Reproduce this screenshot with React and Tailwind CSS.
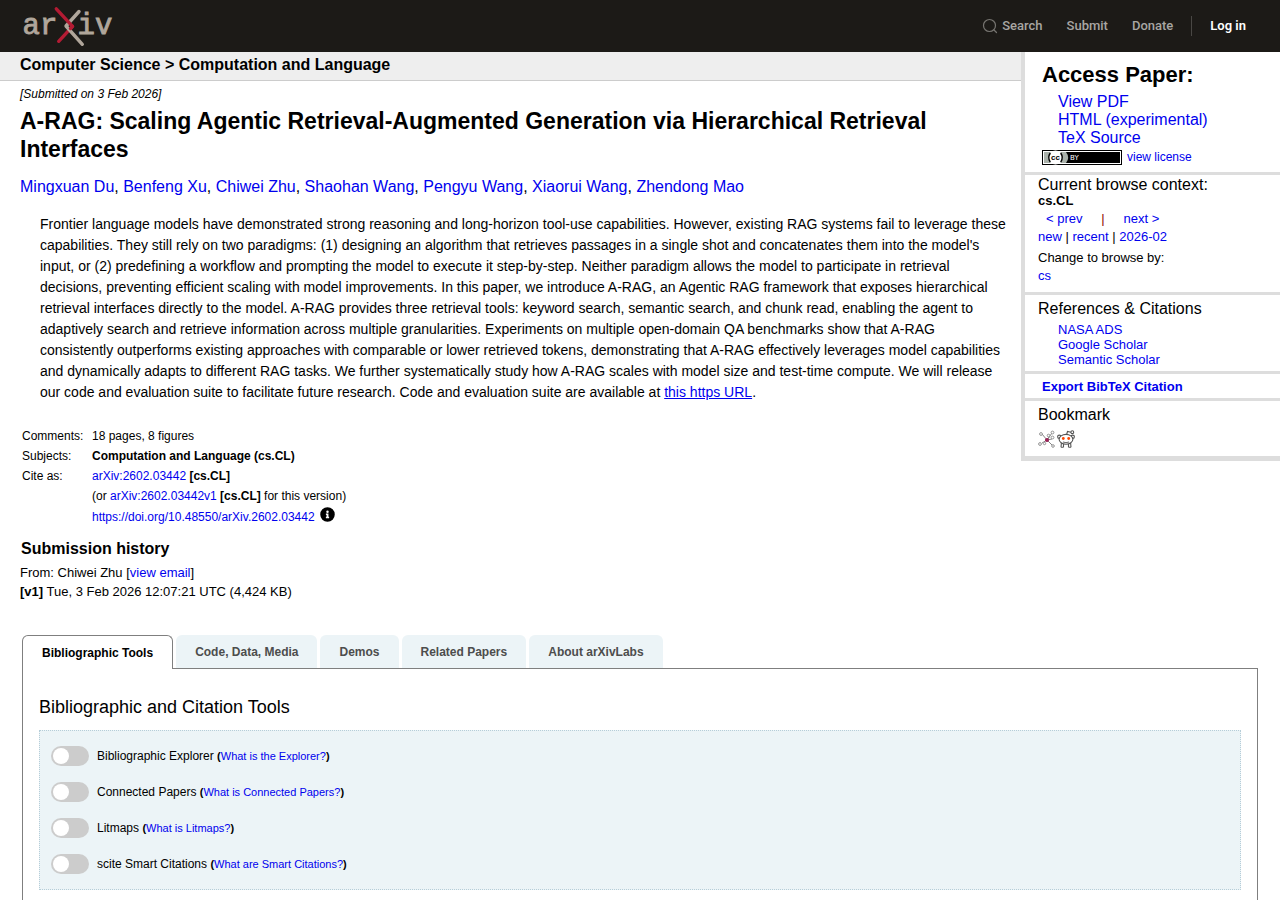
import React from "react";

const link = "text-[#0000ee] hover:underline";

const authors = [
  "Mingxuan Du",
  "Benfeng Xu",
  "Chiwei Zhu",
  "Shaohan Wang",
  "Pengyu Wang",
  "Xiaorui Wang",
  "Zhendong Mao",
];

const tabs = ["Bibliographic Tools", "Code, Data, Media", "Demos", "Related Papers", "About arXivLabs"];

const tools = [
  { id: "explorer", name: "Bibliographic Explorer", help: "What is the Explorer?" },
  { id: "connected", name: "Connected Papers", help: "What is Connected Papers?" },
  { id: "litmaps", name: "Litmaps", help: "What is Litmaps?" },
  { id: "scite", name: "scite Smart Citations", help: "What are Smart Citations?" },
];

function Logo() {
  return (
    <svg width="92" height="44" viewBox="22 4 92 44" role="img" aria-label="arXiv">
      <g fill="#b0a69b" stroke="#b0a69b" strokeWidth="0.9" fontSize="29" fontFamily="'Liberation Mono', monospace">
        <text x="22.500" y="34.300">ar</text>
        <text x="77.500" y="34.300">iv</text>
      </g>
      <g fill="none" strokeLinecap="round" strokeLinejoin="round" strokeWidth="3.400">
        <path d="M72.500 26.300 58.700 41.300" stroke="#b31b33" />
        <path d="M79 11.500 66 26 82.300 44.300" stroke="#b0a69b" />
        <path d="M56.300 8.800 72.500 26.300 70.500 28.500" stroke="#b31b33" />
      </g>
    </svg>
  );
}

function Header() {
  const item = "text-[#a8a6a3] hover:text-white";
  return (
    <header className="flex h-13 items-center justify-between bg-[#1c1a17] pl-[22px] pr-[34px]">
      <a href="#home">
        <Logo />
      </a>
      <nav className="flex items-center font-[Roboto,sans-serif] text-[13px] font-medium">
        <a href="#search" className={`${item} flex items-center gap-1`}>
          <svg width="16" height="16" viewBox="0 0 16 16" fill="none" stroke="#767470" strokeWidth="1.2" strokeLinecap="round" aria-hidden="true">
            <circle cx="7.500" cy="7.500" r="6" />
            <path d="m12 12 2.500 2.500" />
          </svg>
          Search
        </a>
        <a href="#submit" className={`${item} ml-6`}>Submit</a>
        <a href="#donate" className={`${item} ml-6`}>Donate</a>
        <span className="ml-[18px] h-5 w-px bg-[#494744]" />
        <a href="#login" className="ml-[18px] font-semibold text-white">Log in</a>
      </nav>
    </header>
  );
}

function Metadata() {
  return (
    <table className="mt-[23px] ml-[21px] text-[12px] leading-5">
      <tbody>
        <tr>
          <td className="w-[71px] pl-px">Comments:</td>
          <td>18 pages, 8 figures</td>
        </tr>
        <tr>
          <td className="pl-px">Subjects:</td>
          <td className="font-bold">Computation and Language (cs.CL)</td>
        </tr>
        <tr>
          <td className="pl-px">Cite as:</td>
          <td>
            <a href="#cite" className={link}>arXiv:2602.03442</a> <b>[cs.CL]</b>
          </td>
        </tr>
        <tr>
          <td></td>
          <td>
            (or <a href="#v1" className={link}>arXiv:2602.03442v1</a> <b>[cs.CL]</b> for this version)
          </td>
        </tr>
        <tr>
          <td></td>
          <td>
            <div className="flex items-start gap-[5px]">
              <a href="#doi" className={`${link} pt-px`}>https://doi.org/10.48550/arXiv.2602.03442</a>
              <button type="button" aria-label="Focus to learn more" className="pt-px">
                <svg className="block" width="15" height="15" viewBox="0 0 512 512" aria-hidden="true">
                  <path d="M256 8a248 248 0 1 0 0 496 248 248 0 0 0 0-496zm0 110a42 42 0 1 1 0 84 42 42 0 0 1 0-84zm56 254c0 7-5 12-12 12h-88c-7 0-12-5-12-12v-24c0-7 5-12 12-12h12v-64h-12c-7 0-12-5-12-12v-24c0-7 5-12 12-12h64c7 0 12 5 12 12v100h12c7 0 12 5 12 12z" />
                </svg>
              </button>
            </div>
          </td>
        </tr>
      </tbody>
    </table>
  );
}

function Paper() {
  return (
    <main className="min-w-0 flex-1">
      <h1 className="border-b border-[#cccccc] bg-[#eeeeee] pt-[3px] pb-[5px] pl-5 text-[16px] leading-5 font-bold">
        Computer Science &gt; Computation and Language
      </h1>
      <p className="mt-[5px] pl-5 text-[12px] leading-4 italic">[Submitted on 3 Feb 2026]</p>
      <h2 className="mt-[5px] max-w-[960px] pl-5 text-[23px] leading-7 font-bold">
        A-RAG: Scaling Agentic Retrieval-Augmented Generation via Hierarchical Retrieval Interfaces
      </h2>
      <p className="mt-3 pl-5 text-[16px] leading-6">
        {authors.map((name, i) => (
          <React.Fragment key={name}>
            {i > 0 && ", "}
            <a href="#author" className={link}>{name}</a>
          </React.Fragment>
        ))}
      </p>
      <blockquote className="mt-[15px] pr-[11px] pl-10 text-[14px] leading-[21px]">
        Frontier language models have demonstrated strong reasoning and long-horizon tool-use capabilities. However,
        existing RAG systems fail to leverage these capabilities. They still rely on two paradigms: (1) designing an
        algorithm that retrieves passages in a single shot and concatenates them into the model's input, or (2)
        predefining a workflow and prompting the model to execute it step-by-step. Neither paradigm allows the model to
        participate in retrieval decisions, preventing efficient scaling with model improvements. In this paper, we
        introduce A-RAG, an Agentic RAG framework that exposes hierarchical retrieval interfaces directly to the model.
        A-RAG provides three retrieval tools: keyword search, semantic search, and chunk read, enabling the agent to
        adaptively search and retrieve information across multiple granularities. Experiments on multiple open-domain
        QA benchmarks show that A-RAG consistently outperforms existing approaches with comparable or lower retrieved
        tokens, demonstrating that A-RAG effectively leverages model capabilities and dynamically adapts to different
        RAG tasks. We further systematically study how A-RAG scales with model size and test-time compute. We will
        release our code and evaluation suite to facilitate future research. Code and evaluation suite are available
        at <a href="#code" className="text-[#0000ee] underline">this https URL</a>.
      </blockquote>
      <Metadata />
      <section className="mt-3 pl-5">
        <h2 className="pl-px text-[16px] leading-5 font-bold">Submission history</h2>
        <p className="mt-1 text-[13px] leading-[19px]">
          From: Chiwei Zhu [<a href="#email" className={link}>view email</a>]
          <br />
          <b>[v1]</b> Tue, 3 Feb 2026 12:07:21 UTC (4,424 KB)
        </p>
      </section>
    </main>
  );
}

function LicenseBadge() {
  return (
    <svg width="80" height="15" viewBox="0 0 80 15" aria-hidden="true">
      <rect width="80" height="15" fill="#000" />
      <rect x="1" y="1" width="78" height="13" fill="#fff" />
      <rect x="2" y="2" width="76" height="11" fill="#000" />
      <path d="M2 2h22a9 9 0 0 1 0 11H2z" fill="#aab2ab" />
      <circle cx="13.500" cy="7.500" r="7" fill="#fff" />
      <path d="M8.300 3a8 8 0 0 0 0 9M18.700 3a8 8 0 0 1 0 9" fill="none" stroke="#000" strokeWidth="1.500" />
      <text x="13.500" y="10" textAnchor="middle" fontSize="8" fontWeight="700" fontFamily="'Liberation Sans', sans-serif">cc</text>
      <text x="28" y="10" fill="#fff" fontSize="7" fontFamily="'DejaVu Sans', sans-serif">BY</text>
    </svg>
  );
}

function BibSonomyIcon() {
  return (
    <svg width="18" height="18" viewBox="0 0 18 18" fill="none" stroke="#888" strokeWidth="0.900" aria-hidden="true">
      <path d="M4 4l5 6 5-1M9 10l5-7M9 10l-5 3M9 10l5 5M9 10l3-4" stroke="#777" />
      <g fill="#fff">
        <circle cx="3" cy="4" r="1.400" />
        <circle cx="14.500" cy="2.500" r="1.400" />
        <circle cx="10.500" cy="5.500" r="1.300" />
        <circle cx="14.500" cy="7.500" r="1.400" />
        <circle cx="2" cy="14" r="1.400" />
        <circle cx="6.500" cy="13.500" r="1.200" />
        <circle cx="15" cy="16" r="1.300" />
      </g>
      <circle cx="9" cy="10" r="1.600" fill="#9b2257" stroke="#9b2257" />
    </svg>
  );
}

function RedditIcon() {
  return (
    <svg width="18" height="18" viewBox="0 0 18 18" fill="none" stroke="#555" strokeWidth="1.100" aria-hidden="true">
      <path d="M9.500 5 10.500 1.500l3.500.7" />
      <circle cx="15.300" cy="2.200" r="1.400" />
      <path d="M4.500 12 4 17.300M13.500 12l.5 5.300M6.500 14v3.300M11.500 14v3.300M4 17.300h2.500M11.500 17.300H14" />
      <circle cx="2.300" cy="6.800" r="1.700" fill="#fff" />
      <circle cx="15.700" cy="6.800" r="1.700" fill="#fff" />
      <ellipse cx="9" cy="9.300" rx="6.900" ry="4.900" fill="#fff" />
      <path d="M6 12q3 1.400 6 0" strokeWidth="0.900" />
      <circle cx="6.300" cy="8.500" r="1.400" fill="#ff4500" stroke="none" />
      <circle cx="11.700" cy="8.500" r="1.400" fill="#ff4500" stroke="none" />
    </svg>
  );
}

function Sidebar() {
  return (
    <aside className="w-[259px] shrink-0 self-start border-b-[5px] border-l-4 border-[#dddddd] text-[13px]">
      <section className="pt-[9px] pb-[7px] pl-[17px]">
        <h2 className="text-[22px] leading-7 font-bold">Access Paper:</h2>
        <ul className="mt-1 pl-4 text-[16px] leading-[18px]">
          <li><a href="#pdf" className={link}>View PDF</a></li>
          <li><a href="#html" className={link}>HTML (experimental)</a></li>
          <li><a href="#tex" className={link}>TeX Source</a></li>
        </ul>
        <a href="#license" className={`${link} mt-[2px] flex items-center gap-[5px] text-[12px] leading-4`}>
          <LicenseBadge />
          view license
        </a>
      </section>
      <section className="border-t-[3px] border-[#dddddd] pt-px pb-[7px] pl-[13px]">
        <h3 className="text-[16px] leading-[18px]">Current browse context:</h3>
        <p className="leading-[14px] font-bold">cs.CL</p>
        <p className="mt-[2px] flex pl-2 leading-[18px]">
          <a href="#prev" className={link}>&lt; prev</a>
          <span className="w-[41px] text-center text-[#900000]">|</span>
          <a href="#next" className={link}>next &gt;</a>
        </p>
        <p className="leading-[18px]">
          <a href="#new" className={link}>new</a> | <a href="#recent" className={link}>recent</a> |{" "}
          <a href="#month" className={link}>2026-02</a>
        </p>
        <p className="mt-[3px] leading-[18px]">Change to browse by:</p>
        <a href="#cs" className={`${link} block leading-[18px]`}>cs</a>
      </section>
      <section className="border-t-[3px] border-[#dddddd] pt-[5px] pb-1 pl-[13px]">
        <h3 className="text-[16px] leading-[18px]">References &amp; Citations</h3>
        <ul className="mt-1 pl-5 leading-[15px]">
          <li><a href="#nasa" className={link}>NASA ADS</a></li>
          <li><a href="#google" className={link}>Google Scholar</a></li>
          <li><a href="#semantic" className={link}>Semantic Scholar</a></li>
        </ul>
      </section>
      <section className="border-t-[3px] border-[#dddddd] pt-[2px] pl-[17px] leading-[22px]">
        <button type="button" className="block font-bold text-[#0000ee] hover:underline">Export BibTeX Citation</button>
      </section>
      <section className="border-t-[3px] border-[#dddddd] pt-[5px] pb-2 pl-[13px]">
        <h3 className="text-[16px] leading-[18px]">Bookmark</h3>
        <div className="mt-[6px] flex gap-px">
          <a href="#bibsonomy" aria-label="BibSonomy"><BibSonomyIcon /></a>
          <a href="#reddit" aria-label="Reddit"><RedditIcon /></a>
        </div>
      </section>
    </aside>
  );
}

function Labs() {
  const [active, setActive] = React.useState(0);
  return (
    <section className="mt-[34px] px-[22px]">
      <div role="tablist" className="flex items-start gap-[3px] text-[12px] leading-[18px] font-bold">
        {tabs.map((name, i) => (
          <button
            key={name}
            type="button"
            role="tab"
            aria-selected={i === active}
            onClick={() => setActive(i)}
            className={
              i === active
                ? "relative z-10 -mb-px h-[34px] rounded-t-md border border-b-0 border-[#7f7f7f] bg-white px-[19px] text-black"
                : "h-[33px] rounded-t-md bg-[#ecf4f7] px-[19px] text-[#4d4d4d]"
            }
          >
            {name}
          </button>
        ))}
      </div>
      <div className="border border-[#7f7f7f] px-4 pt-[27px] pb-8">
        <h2 className="text-[18px] leading-[22px]">Bibliographic and Citation Tools</h2>
        <div className="mt-3 flex flex-col gap-4 border border-dotted border-[#b5cdd8] bg-[#ecf4f7] px-[11px] py-[15px]">
          {tools.map((t) => (
            <div key={t.id} className="flex h-5 items-center gap-2">
              <input
                id={t.id}
                type="checkbox"
                role="switch"
                className="flex h-5 w-[38px] appearance-none items-center rounded-full bg-[#cccccc] px-[2px] before:size-4 before:rounded-full before:bg-white before:content-[''] checked:justify-end checked:bg-[#2196f3]"
              />
              <p className="text-[12px] leading-5">
                <label htmlFor={t.id}>{t.name}</label>{" "}
                <span className="text-[11px]">
                  <b>(</b>
                  <a href="#help" className={link}>{t.help}</a>
                  <b>)</b>
                </span>
              </p>
            </div>
          ))}
        </div>
      </div>
    </section>
  );
}

export default function App() {
  return (
    <div className="min-h-screen bg-white font-['Liberation_Sans',Arial,sans-serif] text-black">
      <Header />
      <div className="flex">
        <Paper />
        <Sidebar />
      </div>
      <Labs />
    </div>
  );
}
